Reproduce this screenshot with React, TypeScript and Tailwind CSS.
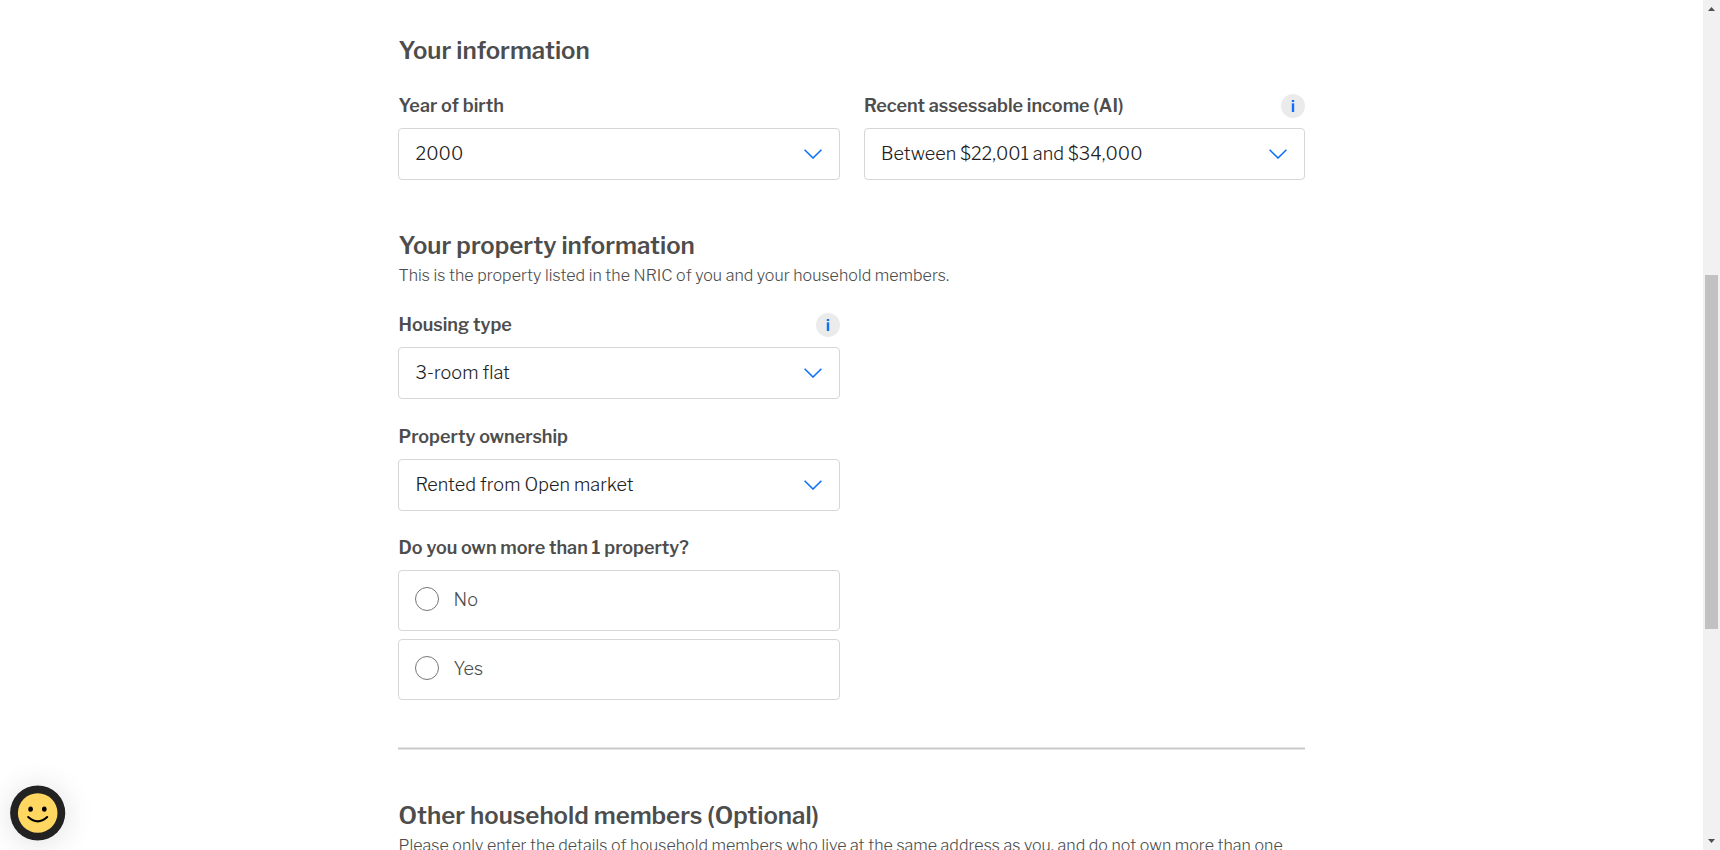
import type { ReactNode } from 'react';

function Chevron() {
  return (
    <svg className="mb-px" width="18" height="10" viewBox="0 0 18 10" fill="none" stroke="#0f71f7" strokeWidth="1.6">
      <path d="M0.6 0.8 L9 9 L17.4 0.8" />
    </svg>
  );
}

function InfoButton() {
  return (
    <button type="button" aria-label="More information" className="flex size-6 items-center justify-center rounded-full bg-[#ebebeb]">
      <svg width="4" height="12" viewBox="0 0 4 12" fill="#0f71f7">
        <rect x="0.8" y="0" width="2.4" height="2" />
        <rect x="0.8" y="3.3" width="2.4" height="8.7" />
      </svg>
    </button>
  );
}

function Heading({ children }: { children: ReactNode }) {
  return <h2 className="h-8 pl-[0.5px] text-2xl leading-8 font-semibold whitespace-nowrap">{children}</h2>;
}

function Label({ children, info = false }: { children: ReactNode; info?: boolean }) {
  return (
    <div className="flex h-6 items-center justify-between">
      <span className="pl-[0.5px] text-lg leading-6 font-semibold whitespace-nowrap">{children}</span>
      {info && <InfoButton />}
    </div>
  );
}

function SelectField({ label, value, info }: { label: string; value: string; info?: boolean }) {
  return (
    <div className="flex flex-col gap-2.5">
      <Label info={info}>{label}</Label>
      <div className="flex h-[52px] items-center justify-between rounded border border-[#d6d6d6] pr-[17px] pl-[16.5px]">
        <span className="text-lg leading-6 font-[340] tracking-[0.07px] whitespace-nowrap text-[#222]">{value}</span>
        <Chevron />
      </div>
    </div>
  );
}

function RadioOption({ label }: { label: string }) {
  return (
    <div className="flex h-[61px] items-center gap-[14.5px] rounded border border-[#d6d6d6] pb-1 pl-4">
      <span className="size-6 rounded-full border border-[#777]" />
      <span className="pt-[3px] text-lg leading-6 font-[340] tracking-[0.05px]">{label}</span>
    </div>
  );
}

function Feedback() {
  return (
    <div className="absolute top-[785px] left-[10px] size-14 rounded-full shadow-[0_2px_30px_rgba(0,0,0,0.13)]">
      <svg width="56" height="56" viewBox="0 0 56 56">
        <circle cx="27.7" cy="28" r="27.6" fill="#222" />
        <circle cx="27.7" cy="28" r="19.8" fill="#ffd761" />
        <ellipse cx="20.6" cy="24.2" rx="2.3" ry="2.6" fill="#000" />
        <ellipse cx="34.3" cy="24.2" rx="2.3" ry="2.6" fill="#000" />
        <path d="M18.2 32 Q27.7 40.6 37.2 32" fill="none" stroke="#000" strokeWidth="2.1" strokeLinecap="round" />
      </svg>
    </div>
  );
}

function Scrollbar() {
  return (
    <div className="flex w-[17px] shrink-0 flex-col items-center justify-between bg-[#f1f1f1] py-[7px]">
      <svg width="7" height="4" viewBox="0 0 7 4" fill="#505050"><path d="M3.5 0 L7 4 H0 Z" /></svg>
      <div className="mt-auto mb-[210px] h-[354px] w-[13px] bg-[#c1c1c1]" />
      <svg width="7" height="4" viewBox="0 0 7 4" fill="#505050"><path d="M3.5 4 L7 0 H0 Z" /></svg>
    </div>
  );
}

export default function App() {
  return (
    <div className="relative flex h-[850px] w-[1720px] overflow-hidden bg-white font-['Libre_Franklin',Inter,sans-serif] text-[#4d4d4d]">
      <main className="flex-1 pt-[35px] pl-[398px]">
        <div className="w-[907px]">
          <section>
            <Heading>Your information</Heading>
            <div className="mt-[27px] grid grid-cols-2 gap-6">
              <SelectField label="Year of birth" value="2000" />
              <SelectField label="Recent assessable income (AI)" value="Between $22,001 and $34,000" info />
            </div>
          </section>

          <section className="mt-[50px]">
            <Heading>Your property information</Heading>
            <p className="mt-0.5 pl-[0.5px] text-base leading-6 font-[340] tracking-[0.045px] whitespace-nowrap">
              This is the property listed in the NRIC of you and your household members.
            </p>
            <div className="mt-[25px] flex w-[442px] flex-col">
              <SelectField label="Housing type" value="3-room flat" info />
              <div className="mt-[26px]">
                <SelectField label="Property ownership" value="Rented from Open market" />
              </div>
              <div className="mt-[25px] flex flex-col">
                <Label>Do you own more than 1 property?</Label>
                <div className="mt-[10px] flex flex-col gap-2">
                  <RadioOption label="No" />
                  <RadioOption label="Yes" />
                </div>
              </div>
            </div>
          </section>

          <div className="mt-[47px] h-[3px] border-y border-[#e6e6e6] bg-[#c8c8c8]" />

          <section className="mt-[50px]">
            <Heading>Other household members (Optional)</Heading>
            <p className="mt-0.5 pl-[0.5px] text-base leading-6 font-[340] tracking-[0.045px] whitespace-nowrap">
              Please only enter the details of household members who live at the same address as you, and do not own more than one
            </p>
          </section>
        </div>
      </main>
      <Scrollbar />
      <Feedback />
    </div>
  );
}
